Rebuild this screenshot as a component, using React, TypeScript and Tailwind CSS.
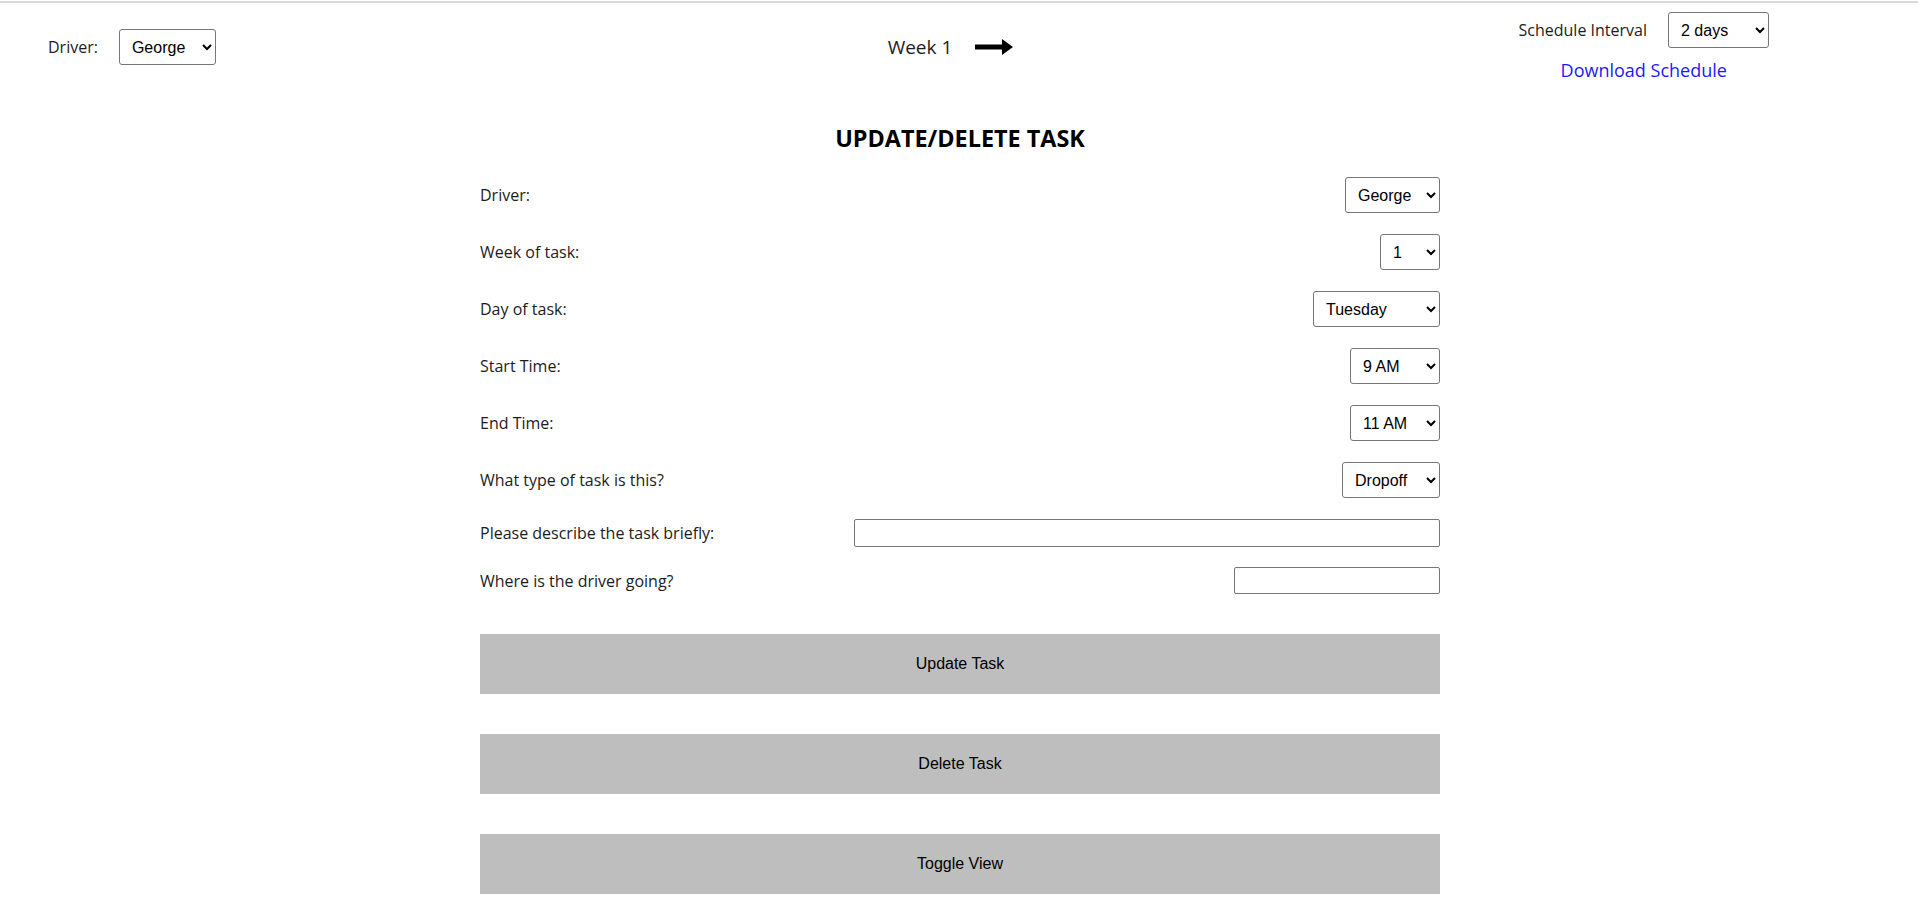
import { useState } from "react"

const drivers = ["George", "Anna", "Mike"]
const weeks = ["1", "2", "3", "4", "5", "6", "7", "8", "9", "10"]
const days = ["Monday", "Tuesday", "Wednesday", "Thursday", "Friday", "Saturday", "Sunday"]
const hours = ["8 AM", "9 AM", "10 AM", "11 AM", "12 PM", "1 PM", "2 PM", "3 PM", "4 PM", "5 PM"]
const taskTypes = ["Pickup", "Dropoff", "Other"]

const selectCls =
  "h-[36px] pl-2 pr-1 border border-[#767676] rounded-[3px] bg-white text-black text-base font-['Liberation_Sans',Arial,sans-serif]"

function Field({ label, children }: { label: string; children: React.ReactNode }) {
  return (
    <div className="flex items-center justify-between">
      <span className="text-base text-[#1c1c1c]">{label}</span>
      {children}
    </div>
  )
}

function Arrow() {
  return (
    <svg width="38" height="16" viewBox="0 0 38 16">
      <rect x="0" y="5.5" width="29" height="5" fill="#000" />
      <polygon points="27,0 38,8 27,16" fill="#000" />
    </svg>
  )
}

export default function App() {
  const [driver, setDriver] = useState("George")
  const [interval, setInterval] = useState("2 days")
  const [form, setForm] = useState({
    driver: "George",
    week: "1",
    day: "Tuesday",
    start: "9 AM",
    end: "11 AM",
    type: "Dropoff",
    description: "",
    location: "",
  })

  const set = (key: keyof typeof form) => (e: React.ChangeEvent<HTMLSelectElement | HTMLInputElement>) =>
    setForm({ ...form, [key]: e.target.value })

  return (
    <div className="min-h-screen bg-white font-['Open_Sans',sans-serif] text-black">
      <div className="h-[2px] mt-px bg-[#dadada]" />

      {/* Top bar */}
      <div className="grid grid-cols-3 items-start">
        <div className="flex items-center gap-[21px] pl-[48px] pt-[26px]">
          <span className="text-base text-[#1c1c1c]">Driver:</span>
          <select value={driver} onChange={(e) => setDriver(e.target.value)} className={`${selectCls} w-[97px] h-[35px]`}>
            {drivers.map((d) => (
              <option key={d}>{d}</option>
            ))}
          </select>
        </div>

        <div className="flex items-center justify-center gap-[23px] h-[36px] mt-[26px] pr-[17px]">
          <span className="text-[19px] text-[#1c1c1c]">Week 1</span>
          <Arrow />
        </div>

        <div className="flex justify-end pr-[149px] pt-[9px]">
          <div className="flex flex-col items-center">
            <div className="flex items-center gap-[21px]">
              <span className="text-base text-[#1c1c1c]">Schedule Interval</span>
              <select value={interval} onChange={(e) => setInterval(e.target.value)} className={`${selectCls} w-[101px] h-[35px]`}>
                <option>1 day</option>
                <option>2 days</option>
                <option>3 days</option>
                <option>1 week</option>
              </select>
            </div>
            <a href="#" className="mt-[9px] text-[18px] text-[#1a1aff]">
              Download Schedule
            </a>
          </div>
        </div>
      </div>

      {/* Form */}
      <div className="pl-[2px]">
        <div className="w-[960px] mx-auto mt-[38px]">
          <h2 className="text-[23.4px] leading-8 font-bold text-center">UPDATE/DELETE TASK</h2>

          <div className="mt-[23px] flex flex-col gap-[21px]">
            <Field label="Driver:">
              <select value={form.driver} onChange={set("driver")} className={`${selectCls} w-[95px]`}>
                {drivers.map((d) => (
                  <option key={d}>{d}</option>
                ))}
              </select>
            </Field>
            <Field label="Week of task:">
              <select value={form.week} onChange={set("week")} className={`${selectCls} w-[60px]`}>
                {weeks.map((w) => (
                  <option key={w}>{w}</option>
                ))}
              </select>
            </Field>
            <Field label="Day of task:">
              <select value={form.day} onChange={set("day")} className={`${selectCls} w-[127px]`}>
                {days.map((d) => (
                  <option key={d}>{d}</option>
                ))}
              </select>
            </Field>
            <Field label="Start Time:">
              <select value={form.start} onChange={set("start")} className={`${selectCls} w-[90px]`}>
                {hours.map((h) => (
                  <option key={h}>{h}</option>
                ))}
              </select>
            </Field>
            <Field label="End Time:">
              <select value={form.end} onChange={set("end")} className={`${selectCls} w-[90px]`}>
                {hours.map((h) => (
                  <option key={h}>{h}</option>
                ))}
              </select>
            </Field>
            <Field label="What type of task is this?">
              <select value={form.type} onChange={set("type")} className={`${selectCls} w-[98px]`}>
                {taskTypes.map((t) => (
                  <option key={t}>{t}</option>
                ))}
              </select>
            </Field>
            <Field label="Please describe the task briefly:">
              <input
                value={form.description}
                onChange={set("description")}
                className="w-[586px] h-[28px] px-1 border border-[#767676] rounded-[2px]"
              />
            </Field>
            <div className="-mt-px">
              <Field label="Where is the driver going?">
                <input
                  value={form.location}
                  onChange={set("location")}
                  className="w-[206px] h-[27px] px-1 border border-[#767676] rounded-[2px]"
                />
              </Field>
            </div>
          </div>

          <div className="mt-[40px] flex flex-col gap-[40px] font-['Liberation_Sans',Arial,sans-serif]">
            <button className="h-[60px] w-full bg-[#bebebe] text-base text-black">Update Task</button>
            <button className="h-[60px] w-full bg-[#bebebe] text-base text-black">Delete Task</button>
            <button className="h-[60px] w-full bg-[#bebebe] text-base text-black">Toggle View</button>
          </div>
        </div>
      </div>
    </div>
  )
}
